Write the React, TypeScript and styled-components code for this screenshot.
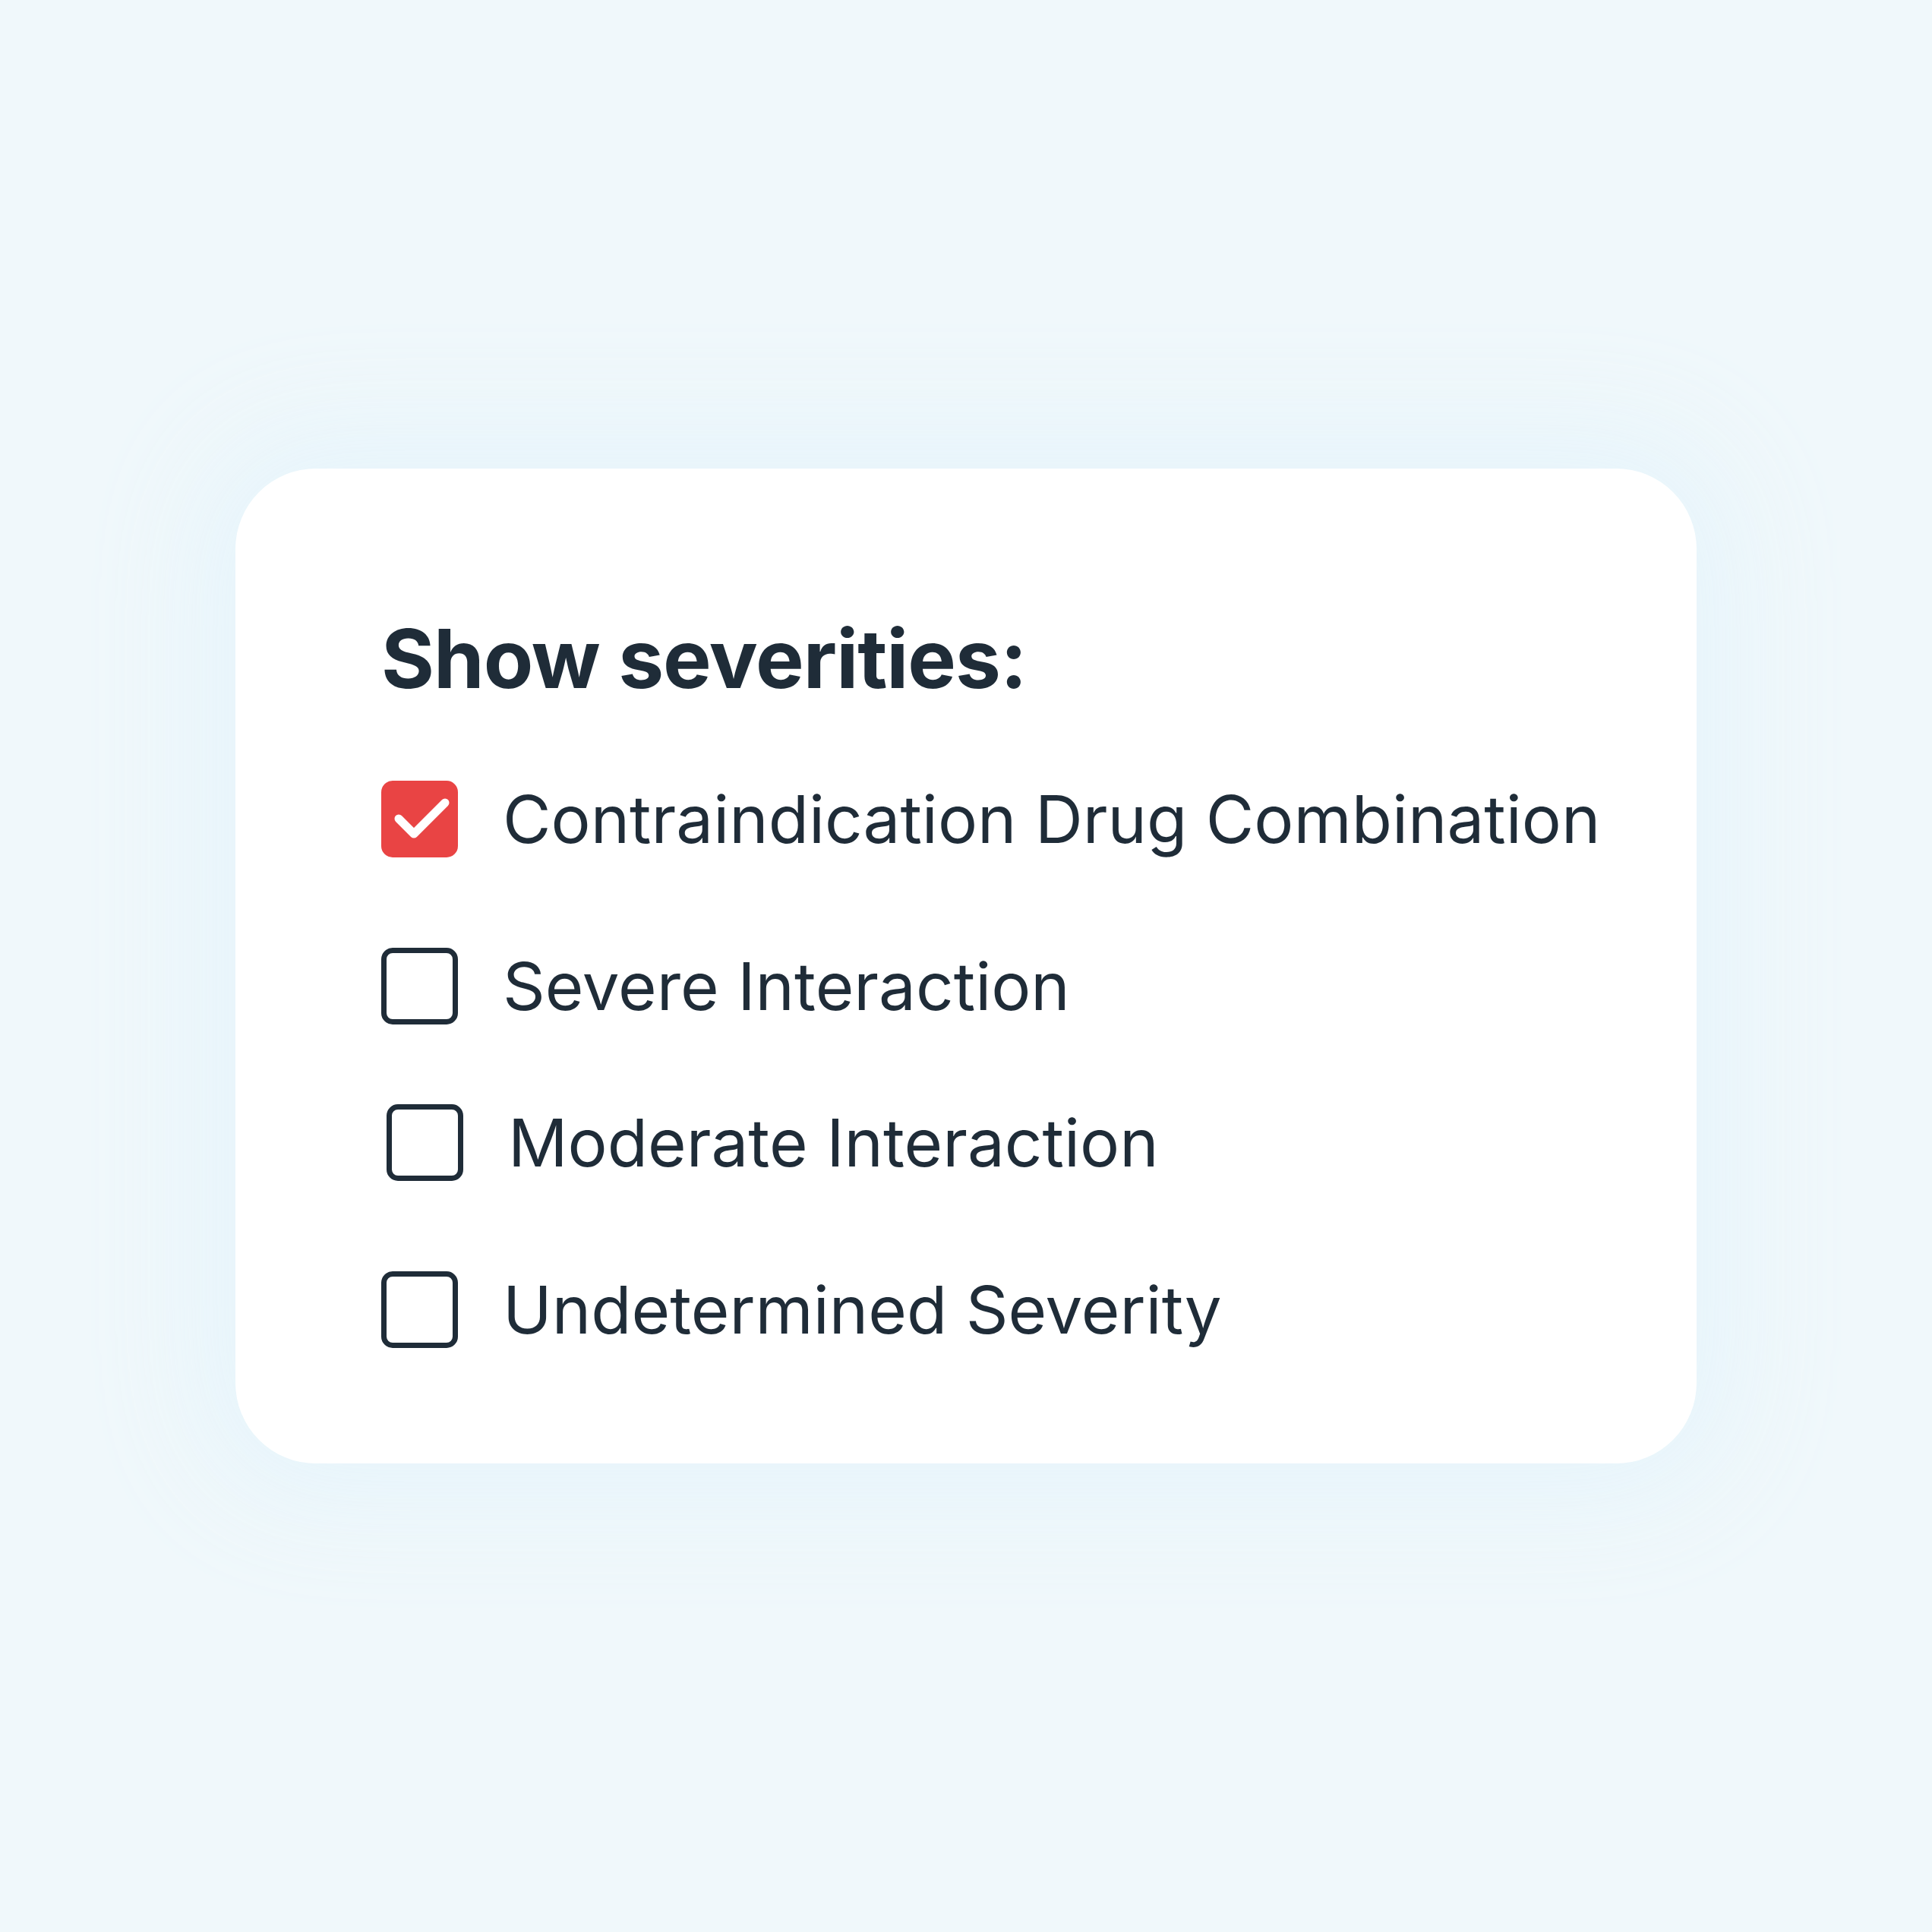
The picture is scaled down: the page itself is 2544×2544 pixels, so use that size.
import React, { useState } from 'react';
import styled, { createGlobalStyle, css } from 'styled-components';

const GlobalStyle = createGlobalStyle`
  html, body {
    margin: 0;
    padding: 0;
    background: #f0f8fb;
  }
  * {
    box-sizing: border-box;
  }
`;

const Page = styled('div')`
  width: 2544px;
  height: 2544px;
  display: flex;
  align-items: center;
  justify-content: center;
  background: #f0f8fb;
  font-family: Inter, 'Noto Sans', sans-serif;
  color: #1f2c38;
`;

const Card = styled('div')`
  width: 1924px;
  padding: 197px 100px 152px 192px;
  background: #fff;
  border-radius: 106px;
  box-shadow: 0 0 150px 40px rgba(228, 243, 252, 0.85);
  display: flex;
  flex-direction: column;
`;

const Title = styled('h2')`
  margin: 0 0 107px;
  font-size: 107px;
  line-height: 1;
  font-weight: 700;
  letter-spacing: -1px;
  white-space: nowrap;
`;

const List = styled('div')`
  display: flex;
  flex-direction: column;
  gap: 119px;
`;

const Row = styled('label')<{ $nudge?: boolean }>`
  display: flex;
  align-items: center;
  gap: 59px;
  cursor: pointer;
  ${(p) =>
    p.$nudge &&
    css`
      margin: -14px 0 0 7px;
    `}
`;

const Box = styled('span')<{ $checked: boolean }>`
  flex: none;
  width: 101px;
  height: 101px;
  border-radius: 15px;
  display: flex;
  align-items: center;
  justify-content: center;
  ${(p) =>
    p.$checked
      ? css`
          background: #e94444;
        `
      : css`
          border: 7px solid #1f2c38;
          background: #fff;
        `}
`;

const Label = styled('span')`
  flex: none;
  font-size: 87px;
  line-height: 1;
  font-weight: 400;
  white-space: nowrap;
`;

const Check = () => (
  <svg width="101" height="101" viewBox="0 0 101 101" fill="none">
    <path
      d="M23 50 L43 70 L84 29"
      stroke="#fff"
      strokeWidth="11"
      strokeLinecap="round"
      strokeLinejoin="round"
    />
  </svg>
);

const SEVERITIES = [
  'Contraindication Drug Combination',
  'Severe Interaction',
  'Moderate Interaction',
  'Undetermined Severity',
];

export default function App() {
  const [checked, setChecked] = useState<boolean[]>([true, false, false, false]);

  const toggle = (i: number) =>
    setChecked((prev) => prev.map((v, j) => (j === i ? !v : v)));

  return (
    <Page>
      <GlobalStyle />
      <Card>
        <Title>Show severities:</Title>
        <List>
          {SEVERITIES.map((name, i) => (
            <Row key={name} $nudge={i === 2} onClick={() => toggle(i)}>
              <Box $checked={checked[i]}>{checked[i] && <Check />}</Box>
              <Label>{name}</Label>
            </Row>
          ))}
        </List>
      </Card>
    </Page>
  );
}
